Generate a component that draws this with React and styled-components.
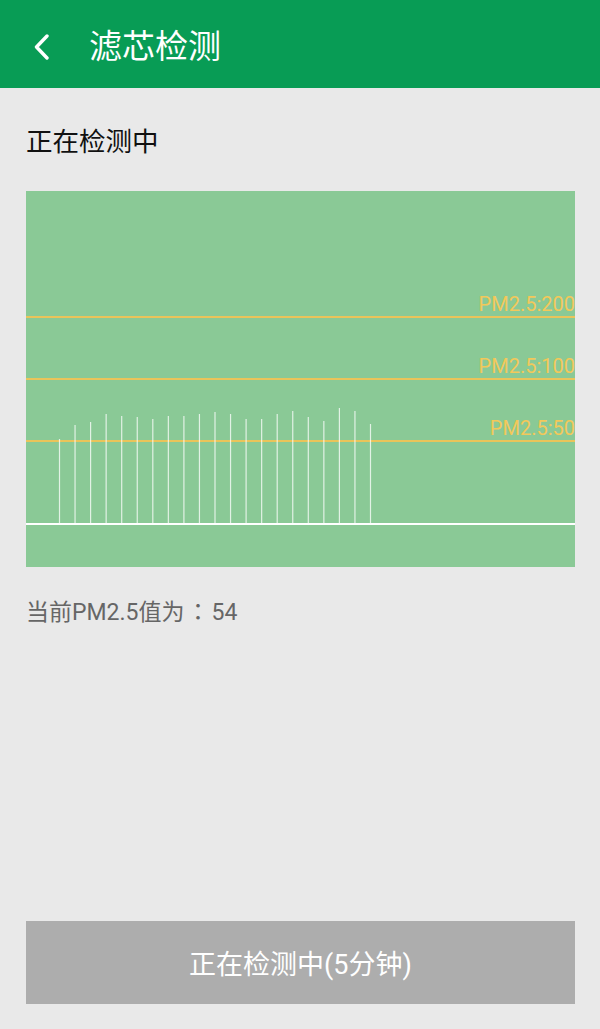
import React from "react";
import styled, { createGlobalStyle } from "styled-components";

const GlobalStyle = createGlobalStyle`
  html, body {
    margin: 0;
    padding: 0;
    background: #e9e9e9;
  }
  body {
    font-family: Roboto, "Noto Sans CJK SC", sans-serif;
  }
`;

const CHART_W = 549;
const CHART_H = 376;
const BASELINE = 333;

const levels = [
  { label: "PM2.5:200", y: 126 },
  { label: "PM2.5:100", y: 188 },
  { label: "PM2.5:50", y: 250 },
];

const bars = [
  248, 234, 231, 223, 225, 226, 228, 225, 225, 223, 221, 223, 228, 228, 223,
  220, 226, 230, 217, 220, 233,
];

const Page = styled.div`
  display: flex;
  flex-direction: column;
  height: 100vh;
  min-height: 1029px;
`;

const Header = styled.header`
  display: flex;
  align-items: center;
  height: 88px;
  padding-top: 6px;
  box-sizing: border-box;
  background: #089c55;
  color: #fff;
  flex-shrink: 0;
`;

const BackButton = styled.button`
  display: flex;
  align-items: center;
  justify-content: center;
  width: 36px;
  height: 40px;
  margin-left: 24px;
  padding: 0;
  border: none;
  background: none;
  cursor: pointer;
`;

const Title = styled.h1`
  margin: 0 0 0 29px;
  font-size: 33px;
  font-weight: 400;
  line-height: 40px;
`;

const Content = styled.main`
  flex: 1;
  display: flex;
  flex-direction: column;
  padding: 0 25px 25px 26px;
`;

const Status = styled.h2`
  margin: 36px 0 0;
  font-size: 26.5px;
  font-weight: 400;
  line-height: 36px;
  color: #111;
`;

const Chart = styled.div`
  margin-top: 31px;
  width: 100%;
  height: ${CHART_H}px;
  background: #8ac996;
`;

const ChartSvg = styled.svg`
  display: block;
  width: 100%;
  height: 100%;
`;

const Reading = styled.p`
  margin: 28px 0 0;
  font-size: 23px;
  line-height: 30px;
  color: #666;
`;

const Colon = styled.span`
  font-family: "Noto Sans CJK TC", sans-serif;
  margin: 0 2px;
`;

const DetectButton = styled.button`
  margin-top: auto;
  width: 100%;
  height: 83px;
  border: none;
  background: #adadad;
  color: #fff;
  font-family: Roboto, "Noto Sans CJK SC", sans-serif;
  font-size: 27px;
  cursor: default;
`;

export default function App() {
  return (
    <>
      <GlobalStyle />
      <Page>
        <Header>
          <BackButton aria-label="返回">
            <svg width="20" height="26" viewBox="0 0 20 26">
              <path
                d="M15 2 L4.5 13 L15 24"
                fill="none"
                stroke="#fff"
                strokeWidth="3.4"
                strokeLinecap="round"
                strokeLinejoin="round"
              />
            </svg>
          </BackButton>
          <Title>滤芯检测</Title>
        </Header>
        <Content>
          <Status>正在检测中</Status>
          <Chart>
            <ChartSvg
              viewBox={`0 0 ${CHART_W} ${CHART_H}`}
              preserveAspectRatio="none"
            >
              {levels.map((l) => (
                <g key={l.label}>
                  <line
                    x1="0"
                    x2={CHART_W}
                    y1={l.y}
                    y2={l.y}
                    stroke="#eac45a"
                    strokeWidth="2"
                  />
                  <text
                    x={CHART_W}
                    y={l.y - 6}
                    textAnchor="end"
                    fill="#f3c85a"
                    fontSize="20"
                    fontFamily="Roboto, sans-serif"
                  >
                    {l.label}
                  </text>
                </g>
              ))}
              {bars.map((top, i) => {
                const x = 33.5 + i * 15.55;
                return (
                  <line
                    key={i}
                    x1={x}
                    x2={x}
                    y1={top}
                    y2={BASELINE}
                    stroke="rgba(255,255,255,0.75)"
                    strokeWidth="1.2"
                  />
                );
              })}
              <line
                x1="0"
                x2={CHART_W}
                y1={BASELINE}
                y2={BASELINE}
                stroke="#fff"
                strokeWidth="2"
              />
            </ChartSvg>
          </Chart>
          <Reading>
            当前PM2.5值为<Colon>：</Colon>54
          </Reading>
          <DetectButton disabled>正在检测中(5分钟)</DetectButton>
        </Content>
      </Page>
    </>
  );
}
